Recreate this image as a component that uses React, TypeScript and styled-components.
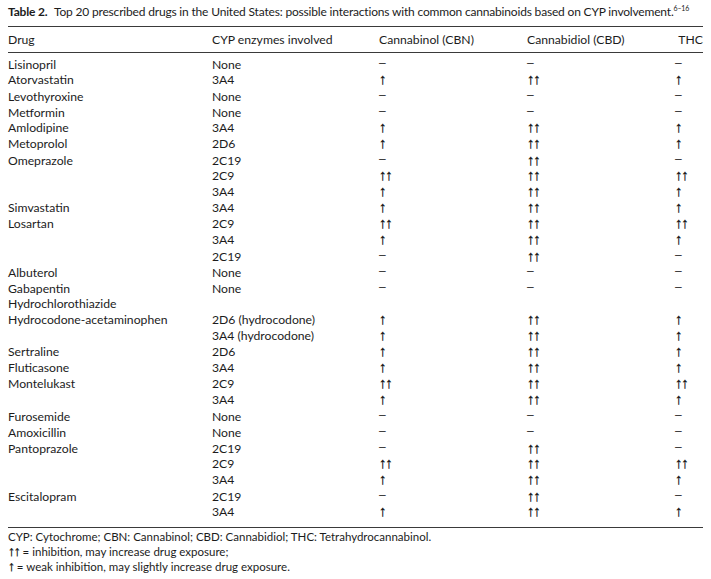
import React from "react";
import styled, { createGlobalStyle } from "styled-components";

const GlobalStyle = createGlobalStyle`
  body {
    margin: 0;
    background: #fff;
    color: #1c1c1c;
    font-family: "Lato", "DejaVu Sans", sans-serif;
  }
`;

const Page = styled.div`
  width: 695px;
  padding: 4px 8px 0;
`;

const Title = styled.div`
  font-size: 12px;
  letter-spacing: -0.18px;
  line-height: 16px;
  white-space: nowrap;
  b {
    font-weight: 700;
    margin-right: 4px;
  }
  sup {
    font-size: 7px;
    line-height: 0;
    vertical-align: 5px;
  }
`;

const Table = styled.div`
  margin-top: 6px;
  border-top: 1.5px solid #3a3a3a;
  border-bottom: 1.5px solid #3a3a3a;
`;

const Row = styled.div<{ header?: boolean }>`
  display: grid;
  grid-template-columns: 204px 167px 148px 148px 1fr;
  height: ${(p) => (p.header ? "25px" : "16px")};
  align-items: center;
  font-size: 12.2px;
  line-height: 16px;
  white-space: nowrap;
  ${(p) => p.header && "border-bottom: 1.5px solid #3a3a3a;"}
`;

const Body = styled.div`
  padding: 3px 0 7px;
`;

const Cell = styled.span<{ right?: boolean }>`
  text-align: ${(p) => (p.right ? "right" : "left")};
`;

const Mark = styled.span<{ dash?: boolean }>`
  font-family: "Liberation Sans", "DejaVu Sans", sans-serif;
  font-size: ${(p) => (p.dash ? "12px" : "15px")};
  line-height: 14px;
  letter-spacing: ${(p) => (p.dash ? "0" : "-1.2px")};
  color: ${(p) => (p.dash ? "#333" : "#111")};
  -webkit-text-stroke: ${(p) => (p.dash ? "0" : "0.3px #111")};
  vertical-align: ${(p) => (p.dash ? "2px" : "0")};
`;

const Notes = styled.div`
  padding-top: 1px;
  font-size: 11.5px;
  line-height: 15px;
`;

const Arrows = styled.span`
  font-family: "Liberation Sans", "DejaVu Sans", sans-serif;
  font-size: 14px;
  line-height: 14px;
  letter-spacing: -1.2px;
  color: #111;
  -webkit-text-stroke: 0.3px #111;
  margin-right: 3px;
`;

type Line = [string, string, string, string, string];

const rows: Line[] = [
  ["Lisinopril", "None", "-", "-", "-"],
  ["Atorvastatin", "3A4", "1", "2", "1"],
  ["Levothyroxine", "None", "-", "-", "-"],
  ["Metformin", "None", "-", "-", "-"],
  ["Amlodipine", "3A4", "1", "2", "1"],
  ["Metoprolol", "2D6", "1", "2", "1"],
  ["Omeprazole", "2C19", "-", "2", "-"],
  ["", "2C9", "2", "2", "2"],
  ["", "3A4", "1", "2", "1"],
  ["Simvastatin", "3A4", "1", "2", "1"],
  ["Losartan", "2C9", "2", "2", "2"],
  ["", "3A4", "1", "2", "1"],
  ["", "2C19", "-", "2", "-"],
  ["Albuterol", "None", "-", "-", "-"],
  ["Gabapentin", "None", "-", "-", "-"],
  ["Hydrochlorothiazide", "", "", "", ""],
  ["Hydrocodone-acetaminophen", "2D6 (hydrocodone)", "1", "2", "1"],
  ["", "3A4 (hydrocodone)", "1", "2", "1"],
  ["Sertraline", "2D6", "1", "2", "1"],
  ["Fluticasone", "3A4", "1", "2", "1"],
  ["Montelukast", "2C9", "2", "2", "2"],
  ["", "3A4", "1", "2", "1"],
  ["Furosemide", "None", "-", "-", "-"],
  ["Amoxicillin", "None", "-", "-", "-"],
  ["Pantoprazole", "2C19", "-", "2", "-"],
  ["", "2C9", "2", "2", "2"],
  ["", "3A4", "1", "2", "1"],
  ["Escitalopram", "2C19", "-", "2", "-"],
  ["", "3A4", "1", "2", "1"],
];

const effect = (v: string) => {
  if (v === "-") return <Mark dash>–</Mark>;
  if (v === "1") return <Mark>↑</Mark>;
  if (v === "2") return <Mark>↑↑</Mark>;
  return null;
};

export default function App() {
  return (
    <Page>
      <GlobalStyle />
      <Title>
        <b>Table 2.</b> Top 20 prescribed drugs in the United States: possible
        interactions with common cannabinoids based on CYP involvement.
        <sup>6–16</sup>
      </Title>
      <Table>
        <Row header>
          <Cell>Drug</Cell>
          <Cell>CYP enzymes involved</Cell>
          <Cell>Cannabinol (CBN)</Cell>
          <Cell>Cannabidiol (CBD)</Cell>
          <Cell right>THC</Cell>
        </Row>
        <Body>
          {rows.map((r, i) => (
            <Row key={i}>
              <Cell>{r[0]}</Cell>
              <Cell>{r[1]}</Cell>
              <Cell>{effect(r[2])}</Cell>
              <Cell>{effect(r[3])}</Cell>
              <Cell>{effect(r[4])}</Cell>
            </Row>
          ))}
        </Body>
      </Table>
      <Notes>
        <div>
          CYP: Cytochrome; CBN: Cannabinol; CBD: Cannabidiol; THC:
          Tetrahydrocannabinol.
        </div>
        <div>
          <Arrows>↑↑</Arrows>= inhibition, may increase drug exposure;
        </div>
        <div>
          <Arrows>↑</Arrows>= weak inhibition, may slightly increase drug
          exposure.
        </div>
      </Notes>
    </Page>
  );
}
